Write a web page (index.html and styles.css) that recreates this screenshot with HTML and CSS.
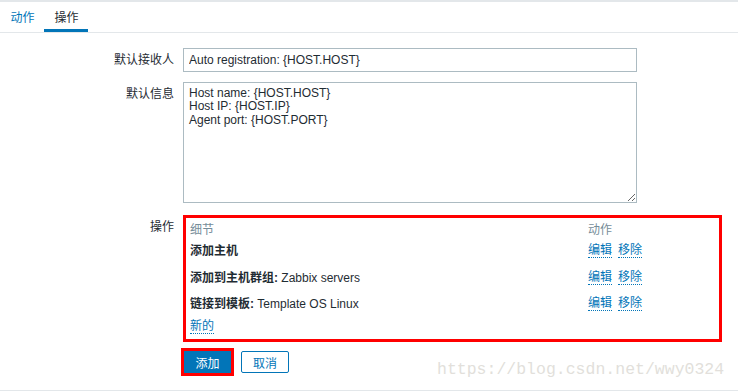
FILE: index.html
```html
<!doctype html>
<html lang="zh-CN">
<head>
  <meta charset="utf-8" />
  <meta name="viewport" content="width=device-width,initial-scale=1" />
  <title>自动注册 — 操作</title>
  <link rel="stylesheet" href="styles.css">
</head>
<body>
<div class="page">

  <ul class="tabs">
    <li class="tab"><a href="#">动作</a></li>
    <li class="tab active">操作</li>
  </ul>

  <form class="form">
    <label class="label">默认接收人</label>
    <input class="field" type="text" value="Auto registration: {HOST.HOST}" />

    <label class="label">默认信息</label>
    <textarea class="field area">Host name: {HOST.HOST}
Host IP: {HOST.IP}
Agent port: {HOST.PORT}</textarea>

    <label class="label">操作</label>
    <div class="ops">
      <div class="ops-head">细节</div>
      <div class="ops-head">动作</div>

      <div class="ops-cell"><b>添加主机</b></div>
      <div class="ops-cell actions"><a href="#" class="link">编辑</a><a href="#" class="link">移除</a></div>

      <div class="ops-cell"><b>添加到主机群组:</b> Zabbix servers</div>
      <div class="ops-cell actions"><a href="#" class="link">编辑</a><a href="#" class="link">移除</a></div>

      <div class="ops-cell"><b>链接到模板:</b> Template OS Linux</div>
      <div class="ops-cell actions"><a href="#" class="link">编辑</a><a href="#" class="link">移除</a></div>

      <div class="ops-new"><a href="#" class="link">新的</a></div>
    </div>

    <div></div>
    <div class="buttons">
      <button type="button" class="btn primary">添加</button>
      <button type="button" class="btn">取消</button>
    </div>
  </form>

  <div class="watermark">https://blog.csdn.net/wwy0324</div>
</div>
</body>
</html>
```

FILE: styles.css
```css
:root{
  --blue:#0275b8;
  --text:#1f2c33;
  --muted:#768d99;
  --line:#e3e7ea;
  --input:#acbbc2;
}

*{box-sizing:border-box;margin:0;padding:0}

body{
  font-family:"Liberation Sans","Noto Sans CJK SC",sans-serif;
  font-size:12px;
  color:var(--text);
  background:#fff;
}

.page{
  position:relative;
  height:391px;
  border-top:2px solid var(--line);
  border-bottom:1px solid var(--line);
}

.tabs{
  list-style:none;
  display:flex;
  height:31px;
  border-bottom:1px solid var(--line);
}

.tab{
  width:44px;
  text-align:center;
  line-height:28px;
  padding-top:2px;
  padding-left:1px;
  border-bottom:3px solid transparent;
}
.tab a{color:var(--blue);text-decoration:none}
.tab.active{border-bottom-color:var(--blue)}

.form{
  display:grid;
  grid-template-columns:174px 1fr;
  column-gap:9px;
  padding:15px 16px 0 0;
}

.label{
  text-align:right;
  line-height:14px;
  padding-top:5px;
}

.field{
  font-family:"Liberation Sans",sans-serif;
  font-size:12px;
  color:var(--text);
  width:454px;
  height:24px;
  padding:0 5px;
  border:1px solid var(--input);
  background:#fff;
  margin-bottom:10px;
}

.area{
  height:121px;
  padding:4px 5px;
  line-height:13.4px;
  margin-bottom:12px;
}

.ops{
  display:grid;
  grid-template-columns:1fr 127px;
  grid-template-rows:20px 26px 27px 26px 18px;
  align-items:center;
  border:3px solid #f00;
  padding:0 4px 4px;
  margin-bottom:9px;
}

.ops-head{color:var(--muted)}
.ops-cell{line-height:14px}
.ops-cell b{font-weight:bold}

.actions{display:flex;gap:6px}

.ops-new{grid-column:1 / -1}

.link{
  display:inline-block;
  color:var(--blue);
  text-decoration:none;
  line-height:13px;
  border-bottom:1px dotted var(--blue);
}

.buttons{display:flex;gap:10px}

.btn{
  font-family:"Liberation Sans","Noto Sans CJK SC",sans-serif;
  font-size:12px;
  height:22px;
  width:48px;
  border:1px solid var(--blue);
  border-radius:2px;
  background:#fff;
  color:var(--blue);
  cursor:pointer;
}
.btn.primary{
  width:47px;
  margin-left:1px;
  border-radius:0;
  background:var(--blue);
  color:#fff;
  outline:3px solid #f00;
}

.watermark{
  position:absolute;
  left:437px;
  top:358px;
  font-family:"Liberation Mono",monospace;
  font-size:16.5px;
  line-height:20px;
  color:#e2dfdb;
}
```
